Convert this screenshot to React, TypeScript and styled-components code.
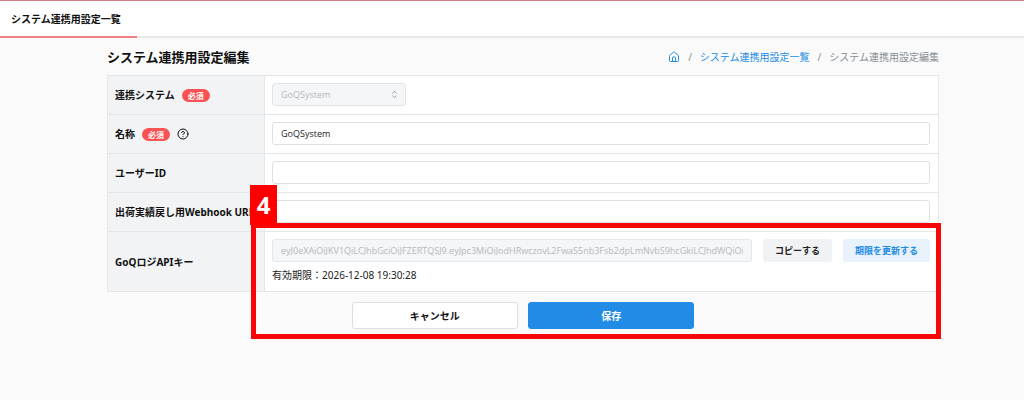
import React from "react";
import styled, { createGlobalStyle } from "styled-components";
import { CircleHelp, House } from "lucide-react";
import { TbSelector } from "react-icons/tb";

const GlobalStyle = createGlobalStyle`
  *, *::before, *::after { box-sizing: border-box; }
  body {
    margin: 0;
    background: #fafafa;
    color: #111;
    font-family: "Noto Sans", "Noto Sans CJK JP", sans-serif;
    font-size: 10px;
    line-height: 16px;
  }
  input, select, button { font-family: inherit; }
`;

const Header = styled.header`
  display: flex;
  height: 38px;
  background: #fff;
  border-top: 1px solid #cf7f8b;
  border-bottom: 2px solid #e9e9ea;
`;

const Tab = styled.a`
  display: flex;
  align-items: center;
  margin-bottom: -2px;
  padding: 0 16px 0 11px;
  border-bottom: 2px solid #ee7f84;
  color: #111;
  font-weight: 700;
  text-decoration: none;
`;

const Main = styled.main`
  padding: 8px 85px 24px 107px;
`;

const TitleBar = styled.div`
  display: flex;
  align-items: center;
  justify-content: space-between;
  height: 22px;
  margin-bottom: 7px;
`;

const Title = styled.h1`
  margin: 0;
  font-size: 13px;
  line-height: 20px;
  font-weight: 700;
`;

const Breadcrumbs = styled.nav`
  display: flex;
  align-items: center;
  gap: 8px;
  color: #868e96;
`;

const Crumb = styled.a`
  display: flex;
  color: #228be6;
  text-decoration: none;
`;

const Form = styled.form`
  position: relative;
  padding-bottom: 10px;
`;

const Table = styled.table`
  width: 100%;
  table-layout: fixed;
  border-collapse: collapse;
  background: #fff;
`;

const LabelCell = styled.th`
  width: 157px;
  padding: 0 8px 0 7px;
  border: 1px solid #e3e7ea;
  background: #f1f3f5;
  text-align: left;
  font-weight: 700;
  white-space: nowrap;
`;

const FieldCell = styled.td`
  padding: 7px 8px 8px 7px;
  border: 1px solid #e3e7ea;
`;

const LabelLine = styled.div`
  display: flex;
  align-items: center;
  gap: 7px;
`;

const Required = styled.span`
  padding: 0 6px;
  border-radius: 7px;
  background: #fa5252;
  color: #fff;
  font-size: 8px;
  line-height: 13px;
`;

const FieldRow = styled.div`
  display: flex;
  gap: 11px;
`;

const TextInput = styled.input`
  display: block;
  flex: 1;
  width: 100%;
  min-width: 0;
  height: 23px;
  padding: 0 8px;
  border: 1px solid #dde0e4;
  border-radius: 3px;
  background: #fff;
  color: #222;
  font-family: "Open Sans", "Noto Sans CJK JP", sans-serif;
  font-size: 9px;

  &:disabled {
    background: #f5f6f8;
    border-color: #e5e8eb;
    color: #b5b8bc;
  }
`;

const SelectBox = styled.div`
  position: relative;
  width: 134px;
  color: #8a8f95;

  svg {
    position: absolute;
    top: 6px;
    right: 6px;
    pointer-events: none;
  }
`;

const Select = styled.select`
  display: block;
  width: 100%;
  height: 23px;
  padding: 0 8px;
  border: 1px solid #e1e4e8;
  border-radius: 3px;
  appearance: none;
  background: #f5f6f8;
  color: #b5b8bc;
  font-family: "Open Sans", "Noto Sans CJK JP", sans-serif;
  font-size: 9px;
  opacity: 1;
`;

const SmallButton = styled.button<{ $tone: "gray" | "blue" }>`
  height: 23px;
  padding: 0 12px;
  border: 0;
  border-radius: 3px;
  background: ${(p) => (p.$tone === "blue" ? "#e7f2fc" : "#f1f2f4")};
  color: ${(p) => (p.$tone === "blue" ? "#228be6" : "#222")};
  font-size: 9px;
  font-weight: 700;
`;

const Expiry = styled.p`
  margin: 5px 0 0;
  color: #222;
`;

const Actions = styled.div`
  display: flex;
  justify-content: center;
  gap: 10px;
  padding-top: 10px;
`;

const ActionButton = styled.button<{ $primary?: boolean }>`
  width: 20%;
  height: 27px;
  border: 1px solid ${(p) => (p.$primary ? "#228be6" : "#dcdfe2")};
  border-radius: 3px;
  background: ${(p) => (p.$primary ? "#228be6" : "#fff")};
  color: ${(p) => (p.$primary ? "#fff" : "#111")};
  font-size: 10px;
  font-weight: 700;
`;

const Callout = styled.div`
  position: absolute;
  top: 148px;
  right: -2px;
  bottom: 0;
  left: 144px;
  border: 5px solid #f60606;
  pointer-events: none;
`;

const CalloutNumber = styled.span`
  position: absolute;
  top: -43px;
  left: -6px;
  width: 27px;
  height: 40px;
  background: #ff0000;
  color: #fff;
  font-size: 24px;
  line-height: 40px;
  font-weight: 700;
  text-align: center;
`;

const API_KEY =
  "eyJ0eXAiOiJKV1QiLCJhbGciOiJFZERTQSJ9.eyJpc3MiOiJodHRwczovL2FwaS5nb3Fsb2dpLmNvbS9hcGkiLCJhdWQiOiJnb";

interface FieldProps {
  id: string;
  label: string;
  required?: boolean;
  help?: boolean;
  children: React.ReactNode;
}

function Field({ id, label, required, help, children }: FieldProps) {
  return (
    <tr>
      <LabelCell scope="row">
        <LabelLine>
          <label htmlFor={id}>{label}</label>
          {required && <Required>必須</Required>}
          {help && <CircleHelp size={12} strokeWidth={2} />}
        </LabelLine>
      </LabelCell>
      <FieldCell>{children}</FieldCell>
    </tr>
  );
}

export default function App() {
  return (
    <>
      <GlobalStyle />
      <Header>
        <Tab href="#list">システム連携用設定一覧</Tab>
      </Header>
      <Main>
        <TitleBar>
          <Title>システム連携用設定編集</Title>
          <Breadcrumbs>
            <Crumb href="#home" aria-label="ホーム">
              <House size={12} strokeWidth={2} />
            </Crumb>
            <span>/</span>
            <Crumb href="#list">システム連携用設定一覧</Crumb>
            <span>/</span>
            <span>システム連携用設定編集</span>
          </Breadcrumbs>
        </TitleBar>
        <Form onSubmit={(e) => e.preventDefault()}>
          <Table>
            <tbody>
              <Field id="system" label="連携システム" required>
                <SelectBox>
                  <Select id="system" disabled>
                    <option>GoQSystem</option>
                  </Select>
                  <TbSelector size={11} />
                </SelectBox>
              </Field>
              <Field id="name" label="名称" required help>
                <TextInput id="name" defaultValue="GoQSystem" />
              </Field>
              <Field id="user" label="ユーザーID">
                <TextInput id="user" />
              </Field>
              <Field id="webhook" label="出荷実績戻し用Webhook URL">
                <TextInput id="webhook" />
              </Field>
              <Field id="key" label="GoQロジAPIキー">
                <FieldRow>
                  <TextInput id="key" disabled defaultValue={API_KEY} />
                  <SmallButton type="button" $tone="gray">コピーする</SmallButton>
                  <SmallButton type="button" $tone="blue">期限を更新する</SmallButton>
                </FieldRow>
                <Expiry>有効期限：2026-12-08 19:30:28</Expiry>
              </Field>
            </tbody>
          </Table>
          <Actions>
            <ActionButton type="button">キャンセル</ActionButton>
            <ActionButton type="submit" $primary>保存</ActionButton>
          </Actions>
          <Callout>
            <CalloutNumber>4</CalloutNumber>
          </Callout>
        </Form>
      </Main>
    </>
  );
}
